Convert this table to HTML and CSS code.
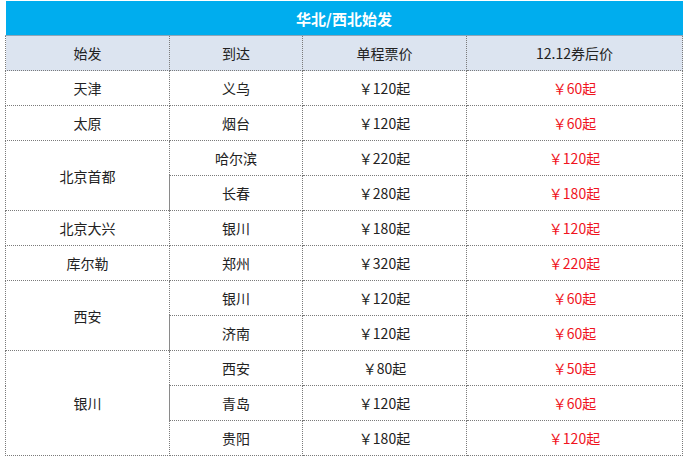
FILE: index.html
```html
<!DOCTYPE html>
<html lang="zh">
<head>
<meta charset="utf-8">
<link rel="stylesheet" href="styles.css">
</head>
<body>
<table class="fares">
  <colgroup>
    <col class="c1"><col class="c2"><col class="c3"><col class="c4">
  </colgroup>
  <tr><th class="title" colspan="4">华北/西北始发</th></tr>
  <tr class="head"><td>始发</td><td>到达</td><td>单程票价</td><td>12.12券后价</td></tr>
  <tr><td>天津</td><td>义乌</td><td>￥120起</td><td class="red">￥60起</td></tr>
  <tr><td>太原</td><td>烟台</td><td>￥120起</td><td class="red">￥60起</td></tr>
  <tr><td rowspan="2">北京首都</td><td>哈尔滨</td><td>￥220起</td><td class="red">￥120起</td></tr>
  <tr><td class="solid">长春</td><td>￥280起</td><td class="red">￥180起</td></tr>
  <tr><td>北京大兴</td><td>银川</td><td>￥180起</td><td class="red">￥120起</td></tr>
  <tr><td>库尔勒</td><td>郑州</td><td>￥320起</td><td class="red">￥220起</td></tr>
  <tr><td rowspan="2">西安</td><td>银川</td><td>￥120起</td><td class="red">￥60起</td></tr>
  <tr><td class="solid">济南</td><td>￥120起</td><td class="red">￥60起</td></tr>
  <tr><td rowspan="3">银川</td><td>西安</td><td>￥80起</td><td class="red">￥50起</td></tr>
  <tr><td class="solid">青岛</td><td>￥120起</td><td class="red">￥60起</td></tr>
  <tr><td>贵阳</td><td>￥180起</td><td class="red">￥120起</td></tr>
</table>
</body>
</html>
```
FILE: styles.css
```css
html, body {
  margin: 0;
  padding: 0;
  background: #ffffff;
}
body {
  padding: 1px 0 0 5px;
  font-family: "Noto Sans CJK SC", "Microsoft YaHei", sans-serif;
  font-size: 14px;
  color: #222222;
}
.fares {
  border-collapse: collapse;
  table-layout: fixed;
  width: 677px;
}
.c1 { width: 164px; }
.c2 { width: 133px; }
.c3 { width: 164px; }
.c4 { width: 216px; }
.fares td {
  height: 34px;
  padding: 0;
  text-align: center;
  vertical-align: middle;
  border: 1px dotted #7a7a7a;
  line-height: 20px;
}
.fares .title {
  height: 34px;
  padding: 0;
  background: #00adee;
  color: #ffffff;
  font-size: 15px;
  font-weight: bold;
  border: none;
  border-bottom: 1px solid #8fa6b8;
}
.fares .head td {
  background: #dce4f0;
}
.fares td.red {
  color: #f0141e;
}
.fares td.solid {
  border-left: 1px solid #8a8a8a;
}
```
